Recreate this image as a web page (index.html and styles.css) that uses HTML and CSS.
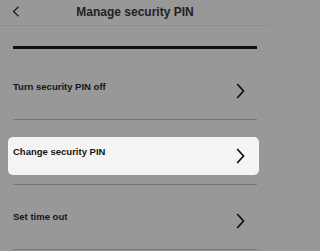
FILE: index.html
```html
<!DOCTYPE html>
<html>
<head>
<meta charset="utf-8">
<link rel="stylesheet" href="styles.css">
</head>
<body>
<div class="screen">
  <header class="topbar">
    <svg class="back" width="8" height="11" viewBox="0 0 8 11"><path d="M6.5 0.8 L1.5 5.5 L6.5 10.2" fill="none" stroke="#1a1a1a" stroke-width="1.2"/></svg>
    <div class="title">Manage security PIN</div>
  </header>
  <main class="content">
    <div class="bar"></div>
    <div class="row">
      <div class="item">
        <span class="label">Turn security PIN off</span>
        <svg class="chev" width="9" height="16" viewBox="0 0 9 16"><path d="M1.2 1 L7.5 8 L1.2 15" fill="none" stroke="#111" stroke-width="1.7"/></svg>
      </div>
    </div>
    <div class="row">
      <div class="item hl">
        <span class="label">Change security PIN</span>
        <svg class="chev" width="9" height="16" viewBox="0 0 9 16"><path d="M1.2 1 L7.5 8 L1.2 15" fill="none" stroke="#111" stroke-width="1.7"/></svg>
      </div>
    </div>
    <div class="row">
      <div class="item">
        <span class="label">Set time out</span>
        <svg class="chev" width="9" height="16" viewBox="0 0 9 16"><path d="M1.2 1 L7.5 8 L1.2 15" fill="none" stroke="#111" stroke-width="1.7"/></svg>
      </div>
    </div>
  </main>
</div>
</body>
</html>
```
FILE: styles.css
```css
html, body {
  margin: 0;
  padding: 0;
  background: #989898;
}
.screen {
  width: 270px;
  height: 251px;
  overflow: hidden;
  font-family: "Liberation Sans", Arial, sans-serif;
  color: #151515;
}
.topbar {
  position: relative;
  height: 25px;
  border-bottom: 1px solid #8c8c8c;
  display: flex;
  align-items: center;
  justify-content: center;
}
.back {
  position: absolute;
  left: 12px;
  top: 6px;
}
.title {
  font-size: 12px;
  font-weight: bold;
  color: #222;
  margin-top: -2px;
}
.content {
  padding: 20px 13px 0;
}
.bar {
  height: 3px;
  background: #111;
  margin-bottom: 6px;
}
.row {
  height: 64px;
  box-sizing: content-box;
  padding-top: 0;
  border-bottom: 1.5px solid #777;
  display: flex;
  align-items: center;
}
.item {
  flex: 1;
  height: 38px;
  margin-top: 8px;
  display: flex;
  align-items: center;
  justify-content: space-between;
  padding-right: 12px;
}
.item.hl {
  background: #f4f4f4;
  border-radius: 5px;
  margin-left: -5px;
  margin-right: -2px;
  padding-left: 5px;
  padding-right: 14px;
}
.label {
  font-size: 9.5px;
  font-weight: bold;
  margin-bottom: 9px;
}
.chev {
  display: block;
}
```
